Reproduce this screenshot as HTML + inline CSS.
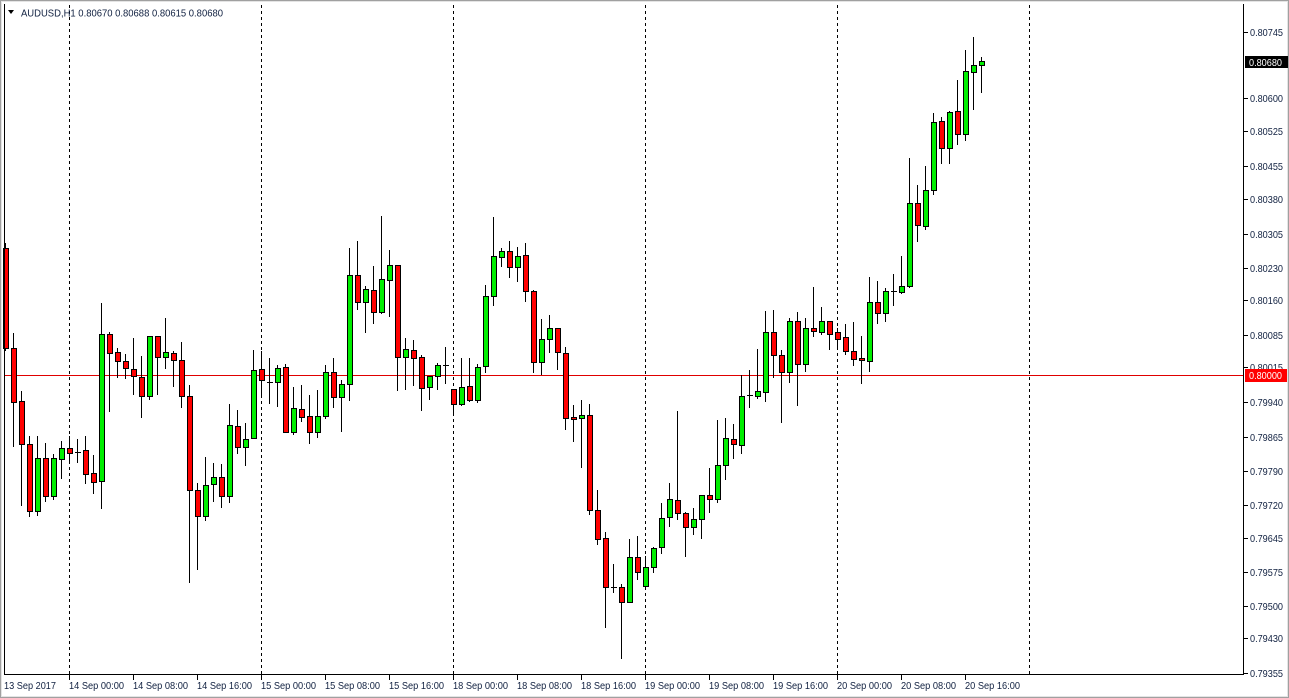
<!DOCTYPE html>
<html><head><meta charset="utf-8"><style>
html,body{margin:0;padding:0;background:#fff;}
body{width:1289px;height:698px;overflow:hidden;}
svg{display:block;font-family:"Liberation Sans",sans-serif;}
</style></head><body>
<svg id="s" width="1289" height="698" xmlns="http://www.w3.org/2000/svg">
<rect x="0" y="0" width="1289" height="698" fill="#fff"/>
<rect x="0.5" y="0.5" width="1288" height="697" fill="none" stroke="#a0a0a0"/>
<rect x="1.5" y="1.5" width="1286" height="695" fill="none" stroke="#e4e4e4"/>
<g id="grid" stroke="#000" stroke-dasharray="3,3" stroke-width="1"></g>
<line x1="4" y1="375.5" x2="1244" y2="375.5" stroke="#e00000"/>
<g id="candles"></g>
<line x1="4.5" y1="4" x2="4.5" y2="675" stroke="#000"/>
<line x1="4" y1="674.5" x2="1244" y2="674.5" stroke="#000"/>
<line x1="1243.5" y1="4" x2="1243.5" y2="675" stroke="#000"/>
<g id="ylab" font-size="10.5" fill="#102040"></g>
<g id="xlab" font-size="10.5" fill="#102040"></g>
<polygon points="8,10 14,10 11,14" fill="#000"/>
<text x="21" y="16.5" font-size="10.5" fill="#102040" textLength="202" lengthAdjust="spacingAndGlyphs">AUDUSD,H1  0.80670 0.80688 0.80615 0.80680</text>
<rect x="1245" y="56" width="43" height="12" fill="#000"/>
<text x="1249" y="66" font-size="10.5" fill="#fff" textLength="33" lengthAdjust="spacingAndGlyphs">0.80680</text>
<rect x="1245" y="369" width="42" height="13" fill="#ff0000"/>
<text x="1249" y="379" font-size="10.5" fill="#fff" textLength="33" lengthAdjust="spacingAndGlyphs">0.80000</text>
</svg>
<script>
var NS="http://www.w3.org/2000/svg";
function el(t,a,p){var e=document.createElementNS(NS,t);for(var k in a)e.setAttribute(k,a[k]);p.appendChild(e);return e;}
var D=[
['r',248,348,243,350],['r',348,402,333,446],['r',401,444,391,505],['r',444,511,436,516],['g',511,458,436,515],
['r',458,496,443,501],['g',496,458,454,499],['g',459,448,441,478],['r',448,453,436,463],['d',452,452,439,462],
['r',450,474,436,483],['r',473,482,455,493],['g',481,334,303,508],['r',334,353,332,411],['r',352,361,348,377],
['r',361,368,354,378],['r',369,376,338,394],['r',377,396,356,417],['g',396,336,336,399],['r',336,357,336,394],
['g',357,352,318,368],['r',353,360,351,386],['r',360,396,342,407],['r',396,490,385,582],['r',490,516,483,569],
['g',516,485,457,520],['g',484,477,463,501],['r',477,496,464,507],['g',496,425,404,502],['r',426,447,410,453],
['g',447,439,423,465],['g',438,370,350,438],['r',369,380,351,397],['d',382,382,358,403],['g',382,368,365,406],
['r',367,432,364,432],['g',432,408,387,434],['r',409,417,385,421],['r',416,432,395,443],['g',432,416,390,437],
['g',416,372,365,418],['r',372,397,358,407],['g',397,384,380,431],['g',384,275,248,400],['r',275,302,241,309],
['g',302,289,286,332],['r',290,312,266,323],['g',312,279,216,313],['g',280,265,250,316],['r',265,357,265,390],
['g',357,349,338,389],['r',350,358,340,385],['r',357,388,355,410],['g',387,376,376,399],['g',376,365,363,389],
['d',365,365,347,383],['r',389,404,389,415],['g',404,387,358,405],['r',386,400,358,401],['g',400,367,364,402],
['g',366,296,285,372],['g',296,256,217,305],['g',257,251,248,266],['r',251,267,241,277],['g',267,256,247,281],
['r',255,291,243,301],['r',291,362,290,372],['g',362,339,319,374],['g',339,328,315,352],['r',328,352,328,369],
['r',353,418,347,429],['r',417,419,405,441],['g',418,415,400,467],['r',415,510,404,514],['r',510,539,490,544],
['r',538,587,532,627],['d',587,587,564,592],['r',587,602,584,658],['g',602,557,539,602],['r',557,572,536,579],
['g',586,567,556,586],['g',567,548,547,572],['g',547,518,503,553],['g',517,499,483,526],['r',500,513,411,519],
['r',513,527,512,556],['g',527,519,508,534],['g',519,495,495,538],['r',495,499,468,512],['g',499,465,420,502],
['g',465,438,418,479],['r',439,444,424,458],['g',445,396,375,453],['d',395,395,370,407],['g',396,391,349,398],
['g',392,332,311,401],['r',332,355,310,377],['r',355,372,350,422],['g',372,321,318,382],['r',321,364,312,405],
['g',364,328,318,371],['r',328,331,287,336],['g',332,321,307,334],['r',321,334,321,349],['r',332,339,328,349],
['r',337,351,324,354],['r',351,359,322,365],['r',358,360,336,383],['g',361,302,277,371],['r',302,313,281,323],
['g',313,291,288,321],['d',291,291,274,305],['g',292,286,256,293],['g',286,203,158,287],['r',203,225,185,241],
['g',226,190,166,229],['g',190,122,113,194],['r',121,148,117,163],['g',148,112,111,163],['r',111,134,80,144],
['g',134,71,50,140],['g',72,65,37,109],['g',65,61,57,92]];
var cg=document.getElementById('candles');
D.forEach(function(d,i){
 var c=5+8*i;
 el('line',{x1:c+0.5,y1:d[3],x2:c+0.5,y2:d[4]+1,stroke:'#000','stroke-width':1},cg);
 var t=Math.min(d[1],d[2]),b=Math.max(d[1],d[2]);
 if(d[0]=='d'){el('line',{x1:c-2,y1:t+0.5,x2:c+4,y2:t+0.5,stroke:'#000'},cg);}
 else el('rect',{x:c-1.5,y:t+0.5,width:5,height:Math.max(b-t,2),fill:d[0]=='g'?'#00ee00':'#ff0000',stroke:'#000'},cg);
});
var g=document.getElementById('grid');
[69,261,453,645,837,1029].forEach(function(x){el('line',{x1:x+0.5,y1:5,x2:x+0.5,y2:674},g);});
var yl=document.getElementById('ylab');
[['0.80745',32],['0.80600',98],['0.80525',131],['0.80455',166],['0.80380',199],['0.80305',234],['0.80230',268],['0.80160',300],['0.80085',335],['0.80015',367],['0.79940',402],['0.79865',437],['0.79790',471],['0.79720',505],['0.79645',538],['0.79575',572],['0.79500',606],['0.79430',638],['0.79355',673]].forEach(function(p){
 el('line',{x1:1244,y1:p[1]+0.5,x2:1248,y2:p[1]+0.5,stroke:'#000'},yl);
 var t=el('text',{x:1250,y:p[1]+4,textLength:33,lengthAdjust:'spacingAndGlyphs'},yl);t.textContent=p[0];
});
var xl=document.getElementById('xlab');
var L=['13 Sep 2017','14 Sep 00:00','14 Sep 08:00','14 Sep 16:00','15 Sep 00:00','15 Sep 08:00','15 Sep 16:00','18 Sep 00:00','18 Sep 08:00','18 Sep 16:00','19 Sep 00:00','19 Sep 08:00','19 Sep 16:00','20 Sep 00:00','20 Sep 08:00','20 Sep 16:00'];
L.forEach(function(s,i){
 var x=i==0?4:69+64*(i-1);
 if(i>0)el('line',{x1:x+0.5,y1:675,x2:x+0.5,y2:680,stroke:'#000'},xl);
 var t=el('text',{x:x,y:689,textLength:i==0?52:55,lengthAdjust:'spacingAndGlyphs'},xl);t.textContent=s;
});
</script>
</body></html>
